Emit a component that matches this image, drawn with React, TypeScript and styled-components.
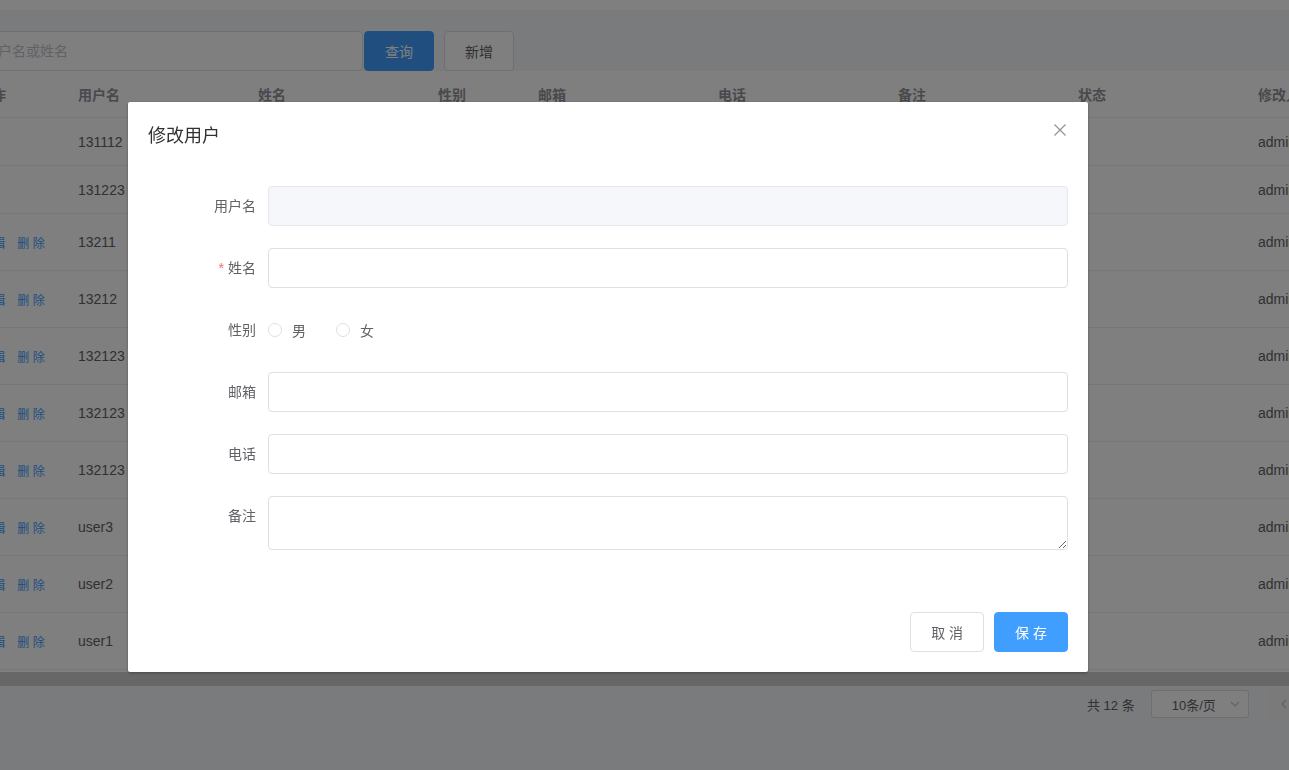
import { useLayoutEffect, useRef } from 'react';
import styled, { createGlobalStyle } from 'styled-components';

type User = {
    username: string;
    name: string;
    gender: string;
    email: string;
    phone: string;
    remark: string;
    editor: string;
    editable: boolean;
};

const users: User[] = [
    { username: '131112', name: '张三', gender: '男', email: '', phone: '', remark: '', editor: 'admin', editable: false },
    { username: '131223', name: '李四', gender: '女', email: '', phone: '', remark: '', editor: 'admin', editable: false },
    { username: '13211', name: '王五', gender: '男', email: '', phone: '', remark: '', editor: 'admin', editable: true },
    { username: '13212', name: '赵六', gender: '男', email: '', phone: '', remark: '', editor: 'admin', editable: true },
    { username: '132123', name: '孙七', gender: '女', email: '', phone: '', remark: '', editor: 'admin', editable: true },
    { username: '132123', name: '周八', gender: '男', email: '', phone: '', remark: '', editor: 'admin', editable: true },
    { username: '132123', name: '吴九', gender: '女', email: '', phone: '', remark: '', editor: 'admin', editable: true },
    { username: 'user3', name: 'user3', gender: '男', email: '', phone: '', remark: '', editor: 'admin', editable: true },
    { username: 'user2', name: 'user2', gender: '女', email: '', phone: '', remark: '', editor: 'admin', editable: true },
    { username: 'user1', name: 'user1', gender: '男', email: '', phone: '', remark: '', editor: 'admin', editable: true },
];

const HEADERS = ['#', '操作', '用户名', '姓名', '性别', '邮箱', '电话', '备注', '状态', '修改人', '修改时间'];
const COLUMNS = '39px 100px 180px 180px 100px 180px 180px 180px 180px 180px 180px';

// the list page behind the dialog is scrolled sideways
const SCROLL_LEFT = 91;

const GlobalStyle = createGlobalStyle`
    html, body {
        margin: 0;
        padding: 0;
        overflow: hidden;
    }
    body {
        font-family: "Liberation Sans", "Noto Sans CJK SC", sans-serif;
        font-size: 14px;
        color: #606266;
    }
    * {
        box-sizing: border-box;
    }
`;

const Chevron = ({ dir }: { dir: 'down' | 'left' | 'right' }) => {
    const d = dir === 'down' ? 'M2 4 L6 8 L10 4' : dir === 'left' ? 'M8 2 L4 6 L8 10' : 'M4 2 L8 6 L4 10';
    return (
        <svg width="12" height="12" viewBox="0 0 12 12">
            <path d={d} fill="none" stroke="#c0c4cc" strokeWidth="1.2" />
        </svg>
    );
};

const CloseIcon = () => (
    <svg width="16" height="16" viewBox="0 0 16 16">
        <path d="M2.5 2.5 L13.5 13.5 M13.5 2.5 L2.5 13.5" stroke="#909399" strokeWidth="1.2" fill="none" />
    </svg>
);

const App = () => {
    const viewportRef = useRef<HTMLDivElement>(null);

    useLayoutEffect(() => {
        if (viewportRef.current) {
            viewportRef.current.scrollLeft = SCROLL_LEFT;
        }
    }, []);

    return (
        <>
            <GlobalStyle />
            <Viewport ref={viewportRef}>
                <Page>
                    <TopStrip />
                    <Main>
                        <Toolbar>
                            <SearchInput placeholder="请输入用户名或姓名" />
                            <ToolButton primary>查询</ToolButton>
                            <ToolButton>新增</ToolButton>
                        </Toolbar>
                        <Table>
                            <HeaderRow>
                                {HEADERS.map(h => <HeaderCell key={h}>{h}</HeaderCell>)}
                            </HeaderRow>
                            {users.map((u, i) => (
                                <BodyRow key={i} tall={u.editable}>
                                    <Cell>{i + 1}</Cell>
                                    <Cell>
                                        {u.editable &&
                                            <>
                                                <TextButton>编 辑</TextButton>
                                                <TextButton>删 除</TextButton>
                                            </>
                                        }
                                    </Cell>
                                    <Cell>{u.username}</Cell>
                                    <Cell>{u.name}</Cell>
                                    <Cell>{u.gender}</Cell>
                                    <Cell>{u.email}</Cell>
                                    <Cell>{u.phone}</Cell>
                                    <Cell>{u.remark}</Cell>
                                    <Cell></Cell>
                                    <Cell>{u.editor}</Cell>
                                    <Cell>2023-05-12 10:21:33</Cell>
                                </BodyRow>
                            ))}
                            <TableScrollbar />
                        </Table>
                        <Pagination>
                            <Total>共 12 条</Total>
                            <SizeSelect>
                                <span>10条/页</span>
                                <Chevron dir="down" />
                            </SizeSelect>
                            <PagerButton><Chevron dir="left" /></PagerButton>
                            <PagerButton active>1</PagerButton>
                            <PagerButton>2</PagerButton>
                            <PagerButton><Chevron dir="right" /></PagerButton>
                        </Pagination>
                    </Main>
                </Page>
            </Viewport>

            <Overlay>
                <Dialog>
                    <DialogHeader>
                        <DialogTitle>修改用户</DialogTitle>
                        <CloseButton><CloseIcon /></CloseButton>
                    </DialogHeader>
                    <DialogBody>
                        <FormItem>
                            <Label>用户名</Label>
                            <TextInput disabled />
                        </FormItem>
                        <FormItem>
                            <Label><Required>*</Required>姓名</Label>
                            <TextInput />
                        </FormItem>
                        <FormItem>
                            <Label>性别</Label>
                            <RadioGroup>
                                <Radio><RadioCircle /><span>男</span></Radio>
                                <Radio><RadioCircle /><span>女</span></Radio>
                            </RadioGroup>
                        </FormItem>
                        <FormItem>
                            <Label>邮箱</Label>
                            <TextInput />
                        </FormItem>
                        <FormItem>
                            <Label>电话</Label>
                            <TextInput />
                        </FormItem>
                        <FormItem>
                            <Label>备注</Label>
                            <TextArea rows={2} />
                        </FormItem>
                    </DialogBody>
                    <DialogFooter>
                        <DialogButton>取 消</DialogButton>
                        <DialogButton primary>保 存</DialogButton>
                    </DialogFooter>
                </Dialog>
            </Overlay>
        </>
    );
};

const Viewport = styled.div`
    width: 100vw;
    height: 100vh;
    overflow: hidden;
`;

const Page = styled.div`
    width: 1719px;
    min-height: 100vh;
    display: flex;
    flex-direction: column;
    background: #f4f6fa;
`;

const TopStrip = styled.div`
    height: 10px;
    background: #ffffff;
`;

const Main = styled.div`
    flex: 1;
    padding: 21px 20px 0;
`;

const Toolbar = styled.div`
    display: flex;
    align-items: center;
    height: 40px;
`;

const SearchInput = styled.input`
    width: 434px;
    height: 40px;
    border: 1px solid #dcdfe6;
    border-radius: 4px;
    padding: 0 15px 0 12px;
    font: inherit;
    color: #606266;
    background: #fff;
    outline: none;

    &::placeholder {
        color: #c0c4cc;
    }
`;

const ToolButton = styled.button<{ primary?: boolean }>`
    width: 70px;
    height: 40px;
    margin-left: ${props => props.primary ? '1px' : '10px'};
    border-radius: 4px;
    border: 1px solid ${props => props.primary ? '#409eff' : '#dcdfe6'};
    background: ${props => props.primary ? '#409eff' : '#ffffff'};
    color: ${props => props.primary ? '#ffffff' : '#606266'};
    font: inherit;
    font-size: 14px;
`;

const Table = styled.div`
    background: #ffffff;
`;

const HeaderRow = styled.div`
    display: grid;
    grid-template-columns: ${COLUMNS};
    height: 47px;
    align-items: center;
    border-bottom: 1px solid #ebeef5;
`;

const HeaderCell = styled.div`
    padding: 0 10px;
    font-weight: bold;
    color: #909399;
    white-space: nowrap;
    overflow: hidden;
`;

const BodyRow = styled.div<{ tall: boolean }>`
    display: grid;
    grid-template-columns: ${COLUMNS};
    height: ${props => props.tall ? '57px' : '48px'};
    align-items: center;
    border-bottom: 1px solid #ebeef5;
`;

const Cell = styled.div`
    padding: 0 10px;
    color: #606266;
    white-space: nowrap;
    overflow: hidden;
    display: flex;
    align-items: center;
`;

const TextButton = styled.span`
    font-size: 12px;
    color: #409eff;
    padding: 7px 0;
    & + & {
        margin-left: 12px;
    }
`;

const TableScrollbar = styled.div`
    height: 16px;
    border-top: 2px solid #ffffff;
    background: #cecece;
`;

const Pagination = styled.div`
    display: flex;
    align-items: center;
    padding: 4px 0 0 1158px;
    height: 32px;
    font-size: 13px;
    color: #606266;
`;

const Total = styled.span`
    margin-right: 16px;
    white-space: nowrap;
`;

const SizeSelect = styled.div`
    width: 98px;
    height: 28px;
    border: 1px solid #dcdfe6;
    border-radius: 3px;
    background: #ffffff;
    display: flex;
    align-items: center;
    justify-content: space-between;
    padding: 0 7px 0 20px;
    margin-right: 20px;
    color: #606266;
`;

const PagerButton = styled.div<{ active?: boolean }>`
    min-width: 30px;
    height: 28px;
    margin-right: 8px;
    border-radius: 2px;
    background: #f4f4f5;
    display: flex;
    align-items: center;
    justify-content: center;
    color: ${props => props.active ? '#409eff' : '#606266'};
    font-weight: bold;
`;

const Overlay = styled.div`
    position: fixed;
    inset: 0;
    background: rgba(0, 0, 0, 0.5);
    padding: 102px 0 0 128px;
`;

const Dialog = styled.div`
    width: 960px;
    background: #ffffff;
    border-radius: 2px;
    box-shadow: 0 1px 3px rgba(0, 0, 0, 0.3);
`;

const DialogHeader = styled.div`
    position: relative;
    padding: 20px 20px 10px;
`;

const DialogTitle = styled.span`
    font-family: "Noto Sans CJK SC", sans-serif;
    font-size: 18px;
    line-height: 24px;
    color: #303133;
`;

const CloseButton = styled.button`
    position: absolute;
    top: 20px;
    right: 20px;
    width: 16px;
    height: 16px;
    padding: 0;
    border: none;
    background: transparent;
    display: flex;
`;

const DialogBody = styled.div`
    padding: 30px 20px;
    display: flex;
    flex-direction: column;
    gap: 22px;
    padding-bottom: 52px;
`;

const FormItem = styled.div`
    display: flex;
    align-items: flex-start;
`;

const Label = styled.label`
    width: 120px;
    flex-shrink: 0;
    padding-right: 12px;
    text-align: right;
    line-height: 40px;
    font-size: 14px;
    color: #606266;
`;

const Required = styled.span`
    color: #f56c6c;
    margin-right: 4px;
`;

const TextInput = styled.input`
    flex: 1;
    height: 40px;
    border: 1px solid ${props => props.disabled ? '#e4e7ed' : '#dcdfe6'};
    background: ${props => props.disabled ? '#f5f7fa' : '#ffffff'};
    border-radius: 4px;
    padding: 0 15px;
    font: inherit;
    color: #606266;
    outline: none;
`;

const TextArea = styled.textarea`
    flex: 1;
    height: 54px;
    border: 1px solid #dcdfe6;
    border-radius: 4px;
    padding: 5px 15px;
    line-height: 1.5;
    font: inherit;
    color: #606266;
    resize: vertical;
    outline: none;
`;

const RadioGroup = styled.div`
    display: flex;
    align-items: center;
    height: 40px;
`;

const Radio = styled.label`
    display: flex;
    align-items: center;
    margin-right: 30px;
    font-size: 14px;
    color: #606266;

    span {
        padding-left: 10px;
    }
`;

const RadioCircle = styled.i`
    display: inline-block;
    width: 14px;
    height: 14px;
    border: 1px solid #dcdfe6;
    border-radius: 50%;
    background: #ffffff;
`;

const DialogFooter = styled.div`
    display: flex;
    justify-content: flex-end;
    gap: 10px;
    padding: 10px 20px 20px;
`;

const DialogButton = styled.button<{ primary?: boolean }>`
    height: 40px;
    padding: 0 20px;
    border-radius: 4px;
    border: 1px solid ${props => props.primary ? '#409eff' : '#dcdfe6'};
    background: ${props => props.primary ? '#409eff' : '#ffffff'};
    color: ${props => props.primary ? '#ffffff' : '#606266'};
    font-family: "Liberation Sans", "Noto Sans CJK SC", sans-serif;
    font-size: 14px;
`;

export default App;
